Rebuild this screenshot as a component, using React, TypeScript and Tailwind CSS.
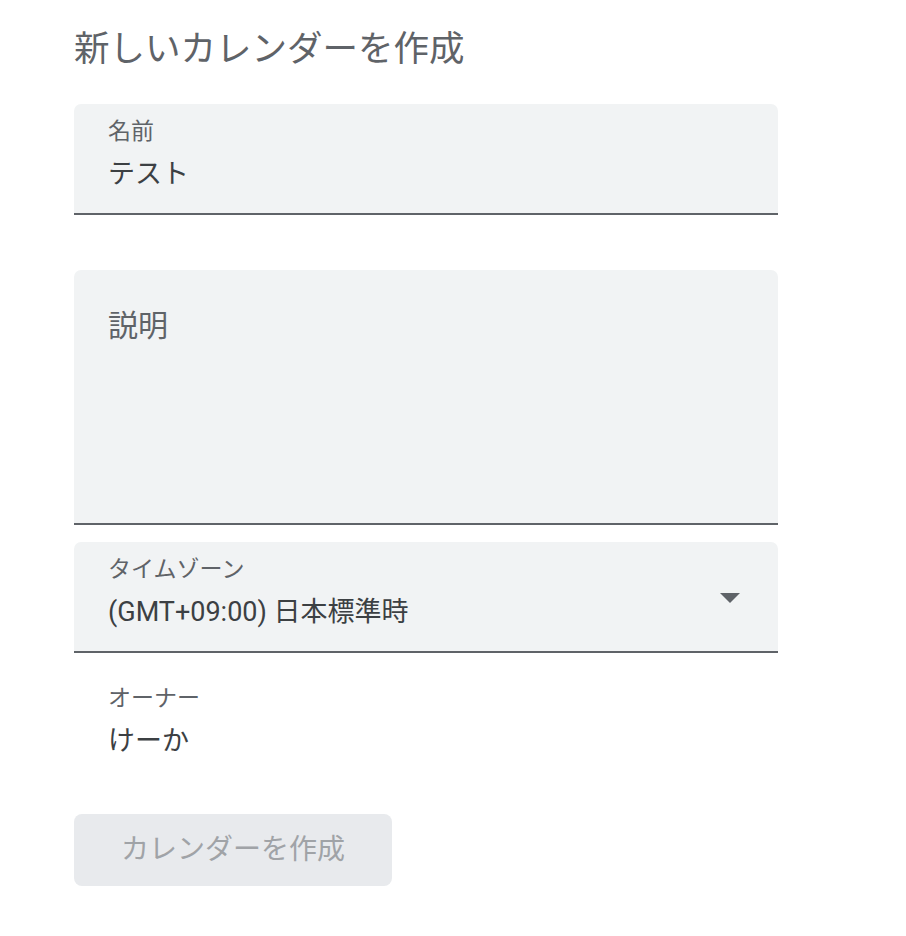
import React from "react";

const font = { fontFamily: 'Roboto, "Noto Sans CJK JP", sans-serif' };

function Field({ label, value, right }: { label: string; value: string; right?: React.ReactNode }) {
  return (
    <div className="relative h-[111px] rounded-t-[7px] bg-[#f1f3f4] border-b-2 border-[#5f6368] px-[34px] pt-[11px]">
      <div className="text-[23px] leading-[34px] text-[#5f6368]">{label}</div>
      <div className="mt-[6px] text-[27px] leading-[38px] text-[#3c4043]">{value}</div>
      {right}
    </div>
  );
}

export default function App() {
  return (
    <div className="min-h-screen bg-white" style={font}>
      <div className="w-[704px] ml-[74px] pt-[24px]">
        <h1 className="text-[35.5px] leading-[50px] text-[#5f6368] font-normal">新しいカレンダーを作成</h1>

        <div className="mt-[30px]">
          <Field label="名前" value="テスト" />
        </div>

        <div className="mt-[55px] h-[255px] rounded-t-[7px] bg-[#f1f3f4] border-b-2 border-[#5f6368] px-[34px] pt-[36px]">
          <div className="text-[30px] leading-[40px] text-[#5f6368]">説明</div>
        </div>

        <div className="mt-[17px]">
          <Field
            label="タイムゾーン"
            value="(GMT+09:00) 日本標準時"
            right={
              <svg className="absolute right-[38px] top-[51px]" width="20" height="10" viewBox="0 0 20 10">
                <path d="M0 0 L20 0 L10 10 Z" fill="#5f6368" />
              </svg>
            }
          />
        </div>

        <div className="px-[34px] pt-[29px]">
          <div className="text-[23px] leading-[34px] text-[#5f6368]">オーナー</div>
          <div className="mt-[6px] text-[27px] leading-[38px] text-[#3c4043]">けーか</div>
        </div>

        <button className="mt-[54px] w-[318px] h-[72px] rounded-[8px] bg-[#e8eaed] text-[28px] text-[#a0a3a7]">
          カレンダーを作成
        </button>
      </div>
    </div>
  );
}
